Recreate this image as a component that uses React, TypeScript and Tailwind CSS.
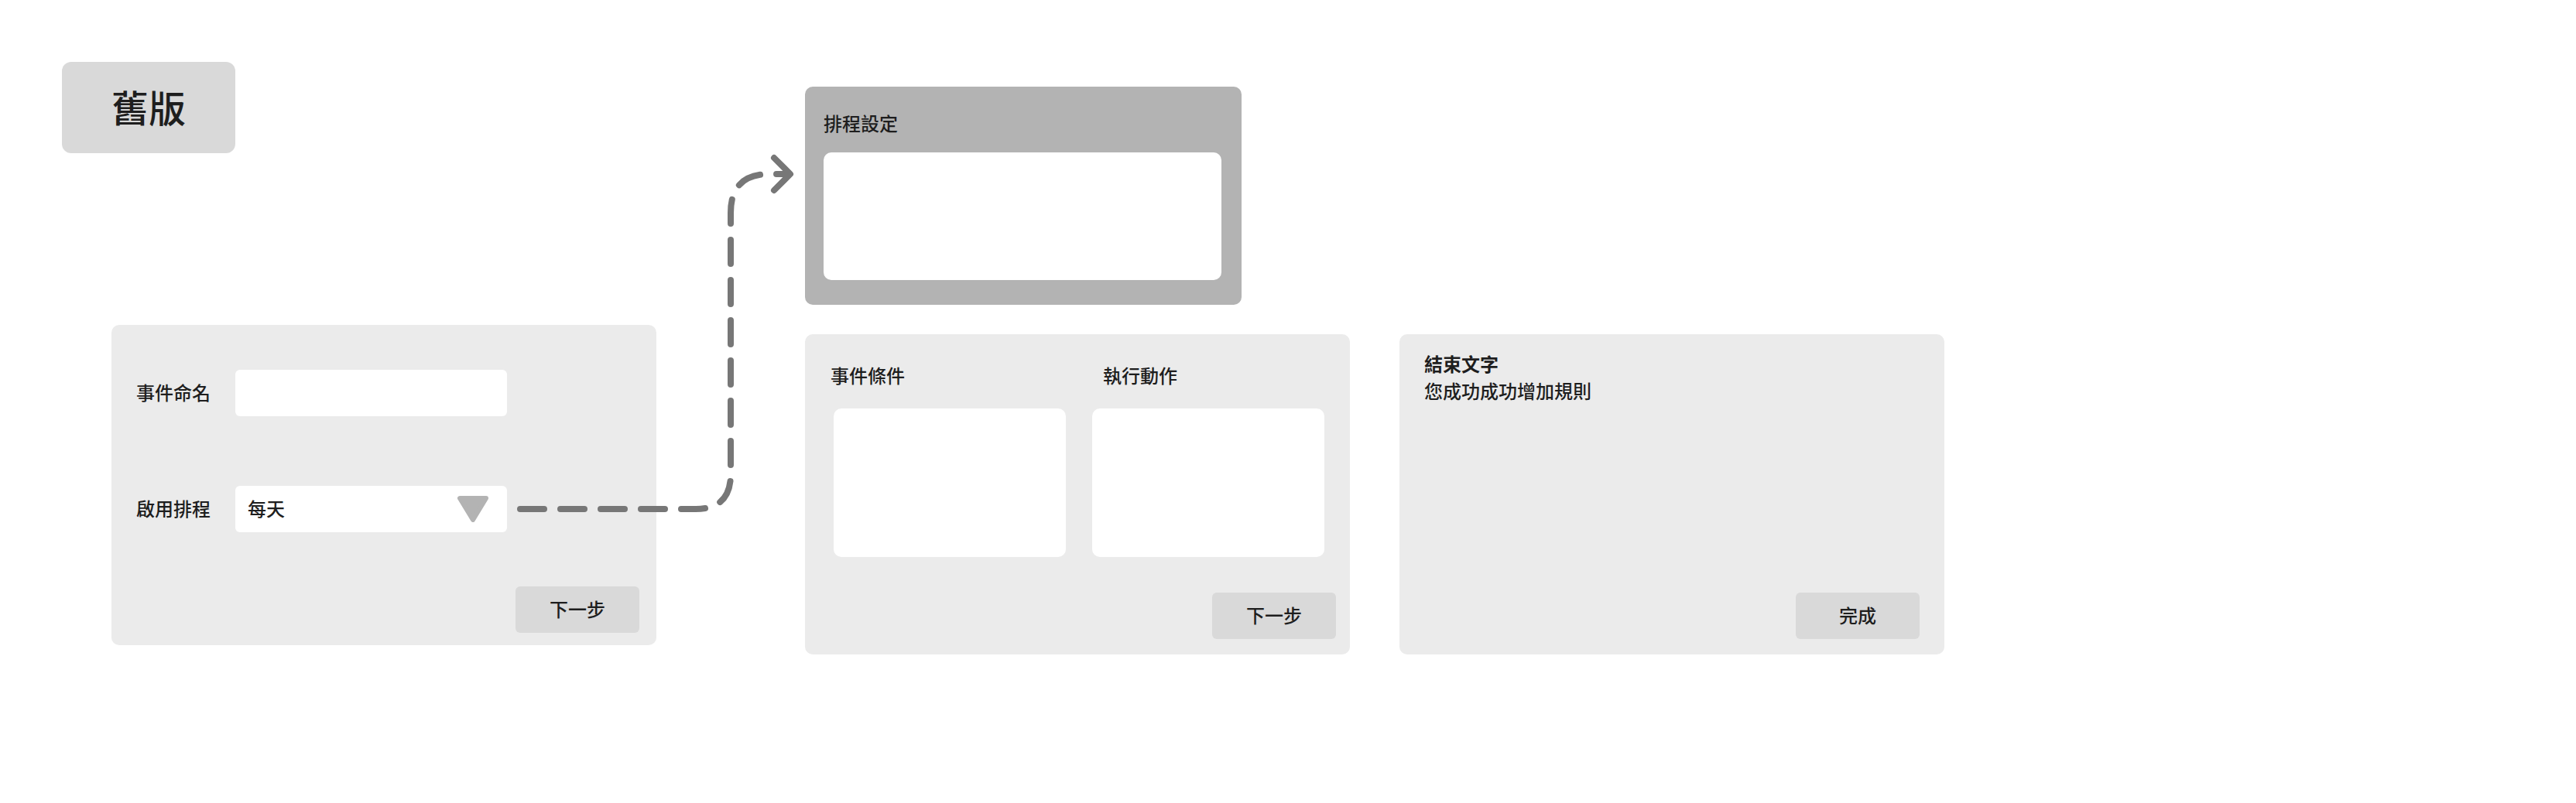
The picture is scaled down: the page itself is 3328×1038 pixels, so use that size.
import React from "react";

function Triangle() {
  return (
    <svg width="40" height="34" viewBox="0 0 40 34">
      <polygon
        points="3,3 37,3 20,31"
        fill="#b3b3b3"
        stroke="#b3b3b3"
        strokeWidth="6"
        strokeLinejoin="round"
      />
    </svg>
  );
}

function Button({ label, className = "" }: { label: string; className?: string }) {
  return (
    <button
      type="button"
      className={`flex h-[60px] w-[160px] items-center justify-center rounded-[6px] bg-[#d9d9d9] pb-[3px] text-[24px] font-medium text-[#1e1e1e] ${className}`}
    >
      {label}
    </button>
  );
}

function NameCard() {
  return (
    <div className="ml-[64px] mt-[222px] flex h-[414px] w-[704px] flex-col rounded-[10px] bg-[#ebebeb] pl-[32px] pr-[22px] pt-[58px]">
      <div className="flex items-center">
        <span className="w-[128px] pb-[3px] text-[24px] leading-[36px]">事件命名</span>
        <div className="h-[60px] w-[351px] rounded-[6px] bg-white" />
      </div>
      <div className="mt-[90px] flex items-center">
        <span className="w-[128px] pb-[3px] text-[24px] leading-[36px]">啟用排程</span>
        <div className="flex h-[60px] w-[351px] items-center justify-between rounded-[6px] bg-white pl-[16px] pr-[24px]">
          <span className="pb-[3px] text-[24px] leading-[36px]">每天</span>
          <Triangle />
        </div>
      </div>
      <Button label="下一步" className="mt-[70px] self-end" />
    </div>
  );
}

function ScheduleCard() {
  return (
    <div className="flex h-[282px] w-[564px] flex-col rounded-[10px] bg-[#b3b3b3] pl-[24px] pr-[26px] pt-[29px]">
      <span className="text-[24px] leading-[36px]">排程設定</span>
      <div className="mt-[20px] h-[165px] w-[514px] rounded-[10px] bg-white" />
    </div>
  );
}

function RuleCard() {
  return (
    <div className="flex h-[414px] w-[704px] flex-col rounded-[10px] bg-[#ebebeb] pl-[37px] pr-[18px] pt-[35px]">
      <div className="flex gap-[34px]">
        <div className="flex w-[300px] flex-col">
          <span className="-ml-[4px] text-[24px] leading-[36px]">事件條件</span>
          <div className="mt-[25px] h-[192px] w-[300px] rounded-[10px] bg-white" />
        </div>
        <div className="flex w-[300px] flex-col">
          <span className="ml-[14px] text-[24px] leading-[36px]">執行動作</span>
          <div className="mt-[25px] h-[192px] w-[300px] rounded-[10px] bg-white" />
        </div>
      </div>
      <Button label="下一步" className="mt-[46px] self-end" />
    </div>
  );
}

function DoneCard() {
  return (
    <div className="flex h-[414px] w-[704px] flex-col rounded-[10px] bg-[#ebebeb] pl-[32px] pr-[32px] pt-[20px]">
      <span className="text-[24px] font-bold leading-[35px]">結束文字</span>
      <span className="text-[24px] leading-[35px]">您成功成功增加規則</span>
      <Button label="完成" className="mt-auto mb-[20px] self-end" />
    </div>
  );
}

export default function App() {
  return (
    <div className="relative flex min-h-[1038px] w-full items-start bg-white pl-[80px] pt-[80px] font-['Noto_Sans_CJK_TC','Noto_Sans',sans-serif] font-medium text-[#1e1e1e]">
      <div className="flex flex-col">
        <div className="flex h-[118px] w-[224px] items-center justify-center rounded-[12px] bg-[#d9d9d9] pb-[5px] text-[48px] leading-none">
          舊版
        </div>
        <NameCard />
      </div>

      <div className="ml-[192px] mt-[32px] flex flex-col">
        <ScheduleCard />
        <div className="mt-[38px] flex gap-[64px]">
          <RuleCard />
          <DoneCard />
        </div>
      </div>

      {/* connector from the schedule select to the schedule settings panel */}
      <svg
        className="pointer-events-none absolute left-0 top-0"
        width="3328"
        height="1038"
        viewBox="0 0 3328 1038"
      >
        <path
          d="M 672 658 H 899 Q 944 658 944 613 V 275 Q 944 225 994 225 H 1016"
          fill="none"
          stroke="#777"
          strokeWidth="8"
          strokeLinecap="round"
          strokeDasharray="31 21"
        />
        <path
          d="M 1000 204 L 1021 225 L 1000 246"
          fill="none"
          stroke="#777"
          strokeWidth="8"
          strokeLinecap="round"
          strokeLinejoin="round"
        />
      </svg>
    </div>
  );
}
